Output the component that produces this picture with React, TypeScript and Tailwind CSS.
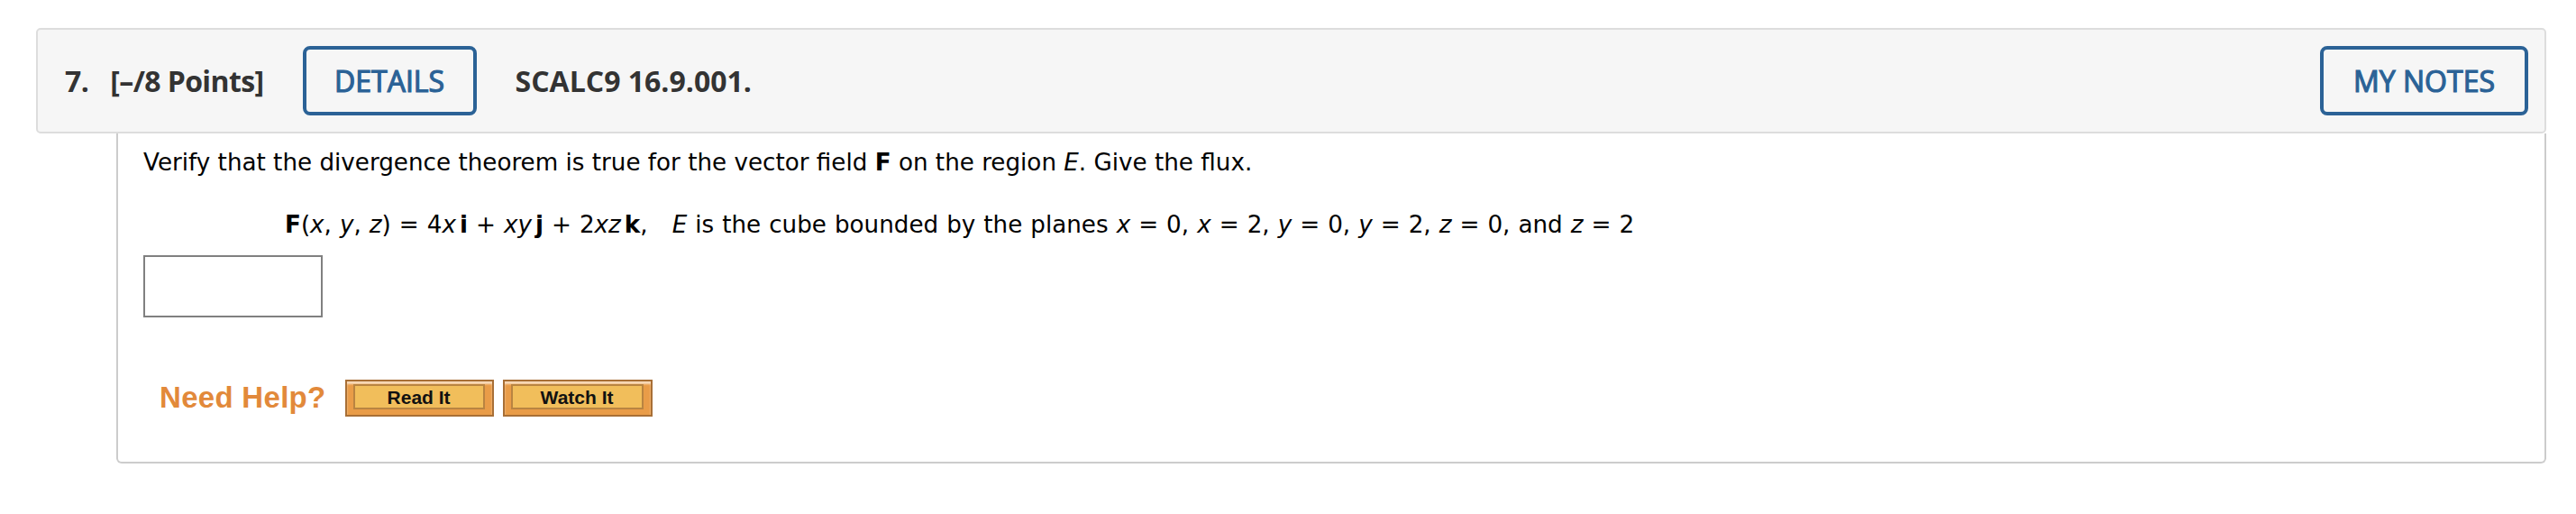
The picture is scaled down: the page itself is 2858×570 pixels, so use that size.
import React from 'react';

function HelpButton({ label }: { label: string }) {
  return (
    <div className="h-[41px] border-2 border-[#a86f36] bg-[#e99c48] pl-[7px] pr-[8px] pt-[3px] pb-[6px] shadow-[inset_0_3px_2px_#f7d9b8]">
      <div className="flex h-[28px] items-center justify-center border-2 border-[#b98441] bg-[#f1be5b] text-[21px] font-bold leading-none text-[#111] [font-family:'Liberation_Sans',Arial,sans-serif]">
        {label}
      </div>
    </div>
  );
}

export default function App() {
  return (
    <div className="h-[570px] w-[2858px] bg-white pl-[40px] pr-[33px] pt-[31px]">
      <div className="flex h-[117px] items-center rounded-[5px] border-2 border-[#dddddd] bg-[#f6f6f6] pl-[30px] pr-[18px] text-[32px] text-[#333333] [font-family:'Open_Sans',sans-serif]">
        <span className="font-bold tracking-[-0.6px]">7.</span>
        <span className="ml-[24px] font-bold tracking-[-0.6px]">[–/8 Points]</span>
        <button className="ml-[43px] flex h-[77px] w-[193px] items-center justify-center rounded-[8px] border-4 border-[#2b6296] text-[#2b6296] [-webkit-text-stroke:1.2px_#2b6296]">
          DETAILS
        </button>
        <span className="ml-[43px] font-bold">SCALC9 16.9.001.</span>
        <button className="ml-auto flex h-[77px] w-[231px] items-center justify-center rounded-[8px] border-4 border-[#2b6296] text-[#2b6296] [-webkit-text-stroke:1.2px_#2b6296]">
          MY NOTES
        </button>
      </div>

      <div className="ml-[89px] h-[366px] rounded-b-[6px] border-2 border-t-0 border-[#cccccc] pl-[28px] pt-[17px] text-[26.2px] leading-[30px] text-black [font-family:'DejaVu_Sans',Verdana,sans-serif]">
        <p>
          Verify that the divergence theorem is true for the vector field <b>F</b> on the region <i>E</i>. Give the flux.
        </p>
        <p className="ml-[157px] mt-[39px] whitespace-pre [word-spacing:0.7px]">
          <b>F</b>(<i>x</i>, <i>y</i>, <i>z</i>) = 4<i>x</i>
          <b className="ml-[4px]">i</b> + <i>xy</i>
          <b className="ml-[4px]">j</b> + 2<i>xz</i>
          <b className="ml-[4px]">k</b>,{'   '}<i>E</i> is the cube bounded by the planes <i>x</i> = 0, <i>x</i> = 2, <i>y</i> = 0,{' '}
          <i>y</i> = 2, <i>z</i> = 0, and <i>z</i> = 2
        </p>
        <div className="mt-[19px] h-[69px] w-[199px] border-2 border-[#808080] bg-white" />
        <div className="mt-[69px] flex items-center pl-[18px]">
          <span className="mr-[21px] mt-[-3px] text-[33px] font-bold leading-none tracking-[0.3px] text-[#e2893a] [font-family:'Liberation_Sans',Arial,sans-serif]">
            Need Help?
          </span>
          <div className="w-[165px]">
            <HelpButton label="Read It" />
          </div>
          <div className="ml-[10px] w-[166px]">
            <HelpButton label="Watch It" />
          </div>
        </div>
      </div>
    </div>
  );
}
